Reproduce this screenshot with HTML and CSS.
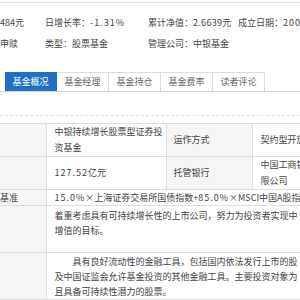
FILE: index.html
```html
<!DOCTYPE html>
<html lang="zh-CN">
<head>
    <meta charset="UTF-8">
    <title>基金概况</title>
    <link rel="stylesheet" href="styles.css">
</head>
<body>
    <div class="page">
        <div class="info">
            <div class="info-row">
                <span class="c1">484元</span>
                <span class="c2">日增长率：<span class="num">-1.31%</span></span>
                <span class="c3">累计净值：<span class="num tight">2.6639</span>元</span>
                <span class="c4">成立日期：<span class="num">200</span></span>
            </div>
            <div class="info-row">
                <span class="c1">申赎</span>
                <span class="c2">类型：股票基金</span>
                <span class="c3">管理公司：中银基金</span>
                <span class="c4"></span>
            </div>
        </div>

        <div class="tabs">
            <div class="tab active">基金概况</div>
            <div class="tab">基金经理</div>
            <div class="tab">基金持仓</div>
            <div class="tab">基金费率</div>
            <div class="tab">读者评论</div>
        </div>
        <div class="divider"></div>

        <table class="profile">
            <colgroup>
                <col class="w-label">
                <col class="w-value">
                <col class="w-label2">
                <col class="w-value2">
            </colgroup>
            <tr class="r-two">
                <th></th>
                <td>中银持续增长股票型证券投<br>资基金</td>
                <th class="mid">运作方式</th>
                <td>契约型开放</td>
            </tr>
            <tr class="r-two">
                <th></th>
                <td><span class="num">127.52</span>亿元</td>
                <th class="mid">托管银行</th>
                <td>中国工商银<br>限公司</td>
            </tr>
            <tr class="r-one">
                <th>基准</th>
                <td colspan="3"><span class="num">15.0%</span>×上海证券交易所国债指数+<span class="num">85.0%</span>×MSCI中国A股指</td>
            </tr>
            <tr class="r-goal">
                <th></th>
                <td colspan="3">着重考虑具有可持续增长性的上市公司，努力为投资者实现中<br>增值的目标。</td>
            </tr>
            <tr class="r-three">
                <th></th>
                <td colspan="3">　　具有良好流动性的金融工具，包括国内依法发行上市的股<br>及中国证监会允许基金投资的其他金融工具。主要投资对象为<br>且具备可持续性潜力的股票。</td>
            </tr>
        </table>
    </div>
</body>
</html>
```

FILE: styles.css
```css
body, html {
    margin: 0;
    background: #fff;
    overflow: hidden;
}

.page {
    font-family: "Noto Sans CJK SC", "Noto Sans", sans-serif;
    font-size: 9px;
    color: #444;
    border-top: 1px solid #e2e2e2;
    margin-top: 2px;
    width: 300px;
}

.num {
    letter-spacing: 1px;
}

.num.tight {
    letter-spacing: 0.3px;
}

.info {
    padding-top: 9px;
}

.info-row {
    display: grid;
    grid-template-columns: 45px 103px 90px 62px;
    line-height: 21px;
    white-space: nowrap;
}

.info-row span {
    overflow: hidden;
}

.tabs {
    display: flex;
    margin: 18px 0 0 5px;
}

.tab {
    width: 52px;
    line-height: 18px;
    text-align: center;
    color: #666;
    border: 1px solid #dcdcdc;
    border-bottom: none;
    border-left: none;
    box-sizing: border-box;
    background: #fff;
}

.tab.active {
    background: #2071c6;
    color: #fff;
    border-color: #2071c6;
}

.divider {
    border-top: 1px solid #d4d4d4;
    height: 23px;
    border-bottom: 1px dashed #e0e0e0;
    margin-bottom: 7px;
}

.profile {
    border-collapse: collapse;
    table-layout: fixed;
    width: 301px;
}

.w-label { width: 46px; }
.w-value { width: 120px; }
.w-label2 { width: 86px; }
.w-value2 { width: 49px; }

.profile th,
.profile td {
    border: 1px solid #dedede;
    padding: 0 0 0 8px;
    line-height: 15px;
    font-weight: normal;
    text-align: left;
    white-space: nowrap;
    overflow: hidden;
}

.profile th {
    background: #f6f6f6;
    color: #444;
    border-left: none;
    padding-left: 0;
}

.profile th.mid {
    padding-left: 7px;
    border-left: 1px solid #dedede;
}

.r-two td,
.r-two th {
    height: 31px;
    line-height: 16px;
}

.r-one td,
.r-one th {
    height: 15px;
}

.r-goal td,
.r-goal th {
    height: 44px;
    vertical-align: top;
    padding-top: 2px;
}

.r-three td,
.r-three th {
    height: 46px;
}
```
